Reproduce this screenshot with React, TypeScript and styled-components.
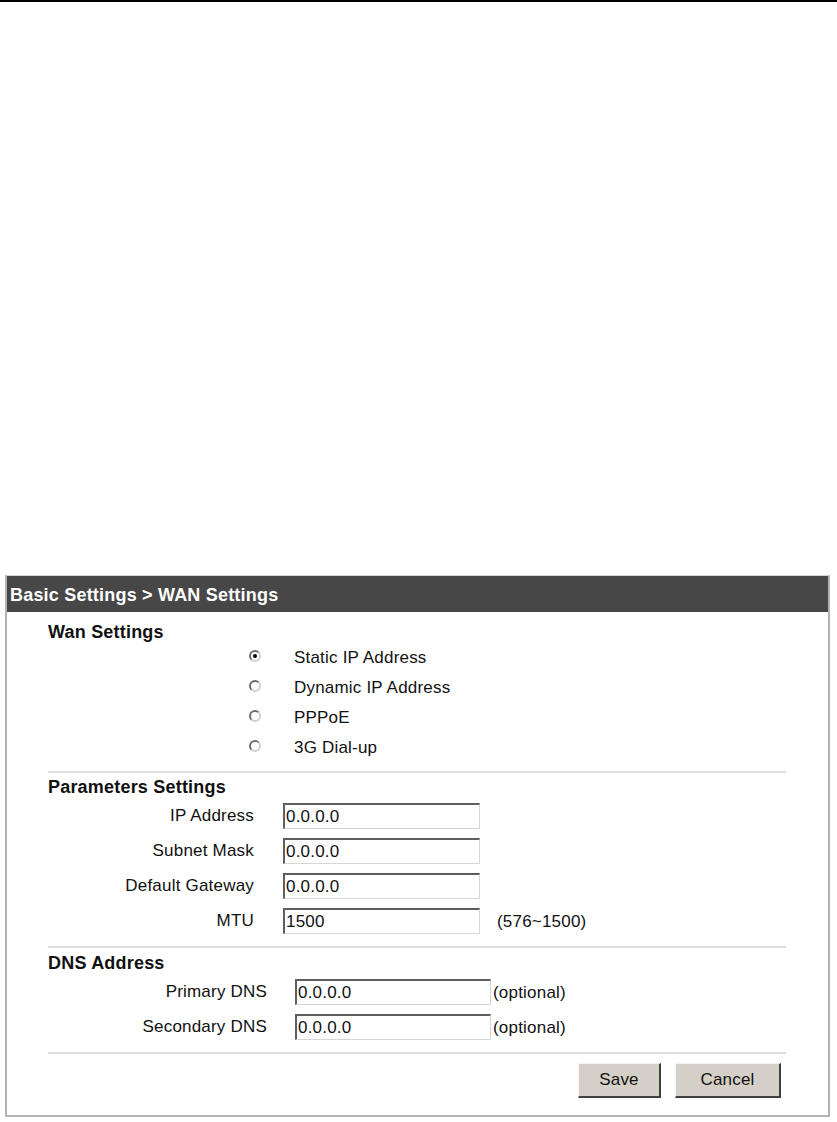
import React from "react";
import styled, { createGlobalStyle } from "styled-components";

const Global = createGlobalStyle`
  html, body { margin: 0; padding: 0; background: #ffffff; }
  body { font-family: "Liberation Sans", Arial, sans-serif; color: #111111; }
`;

const Page = styled.div`
  width: 837px;
  height: 1122px;
  display: flex;
  flex-direction: column;
  box-sizing: border-box;
`;

const TopRule = styled.div`
  height: 2px;
  background: #000000;
  width: 100%;
`;

const Panel = styled.section`
  margin: 573px 0 0 5px;
  width: 825px;
  box-sizing: border-box;
  border: 2px solid #b3b3b3;
  border-top: 1px solid #d4d4d4;
`;

const Header = styled.div`
  height: 36px;
  box-sizing: border-box;
  padding: 3px 0 0 3px;
  line-height: 33px;
  background: #474747;
  color: #ffffff;
  font-weight: bold;
  font-size: 18px;
  letter-spacing: 0.2px;
`;

const Body = styled.div`
  padding: 10px 42px 17px 41px;
  display: flex;
  flex-direction: column;
`;

const SectionTitle = styled.div<{ $gap?: number }>`
  font-weight: bold;
  font-size: 18px;
  line-height: 20px;
  letter-spacing: 0.2px;
  margin-top: ${(p) => p.$gap ?? 0}px;
`;

const Divider = styled.hr<{ $top: number }>`
  margin: ${(p) => p.$top}px 0 0 0;
  border: none;
  height: 2px;
  background: #dedede;
`;

const RadioList = styled.div`
  display: flex;
  flex-direction: column;
  margin-top: 1px;
`;

const RadioRow = styled.label`
  height: 30px;
  display: flex;
  align-items: center;
  padding-left: 201px;
  font-size: 17px;
  letter-spacing: 0.2px;
`;

const RadioMark = styled.span<{ $checked?: boolean }>`
  width: 12px;
  height: 12px;
  box-sizing: border-box;
  border-radius: 50%;
  border: 2px solid;
  border-color: #6e6e6e #d0d0d0 #d0d0d0 #6e6e6e;
  background: #ffffff;
  display: flex;
  align-items: center;
  justify-content: center;
  margin-right: 33px;
  margin-top: -5px;
  &::after {
    content: "";
    width: 4px;
    height: 4px;
    border-radius: 50%;
    background: ${(p) => (p.$checked ? "#000000" : "transparent")};
  }
`;

const FieldGrid = styled.div<{ $label: number; $gap: number; $top: number }>`
  display: grid;
  grid-template-columns: ${(p) => p.$label}px auto 1fr;
  column-gap: ${(p) => p.$gap}px;
  grid-auto-rows: 35px;
  align-items: center;
  margin-top: ${(p) => p.$top}px;
  font-size: 17px;
  letter-spacing: 0.2px;
`;

const FieldLabel = styled.div`
  text-align: right;
`;

const TextBox = styled.input<{ $w: number }>`
  width: ${(p) => p.$w}px;
  height: 26px;
  box-sizing: border-box;
  margin: 0;
  padding: 1px 0 0 1px;
  border-style: solid;
  border-width: 2px 1px 1px 2px;
  border-color: #5e5e5e #d6d6d6 #d6d6d6 #5e5e5e;
  background: #ffffff;
  font-family: "Liberation Sans", Arial, sans-serif;
  font-size: 17px;
  letter-spacing: 0.2px;
  color: #111111;
  outline: none;
`;

const Hint = styled.span<{ $left: number }>`
  margin-left: ${(p) => p.$left}px;
  padding-top: 3px;
`;

const HintCell = styled.div`
  display: flex;
  align-items: center;
`;

const ButtonBar = styled.div`
  display: flex;
  justify-content: flex-end;
  gap: 14px;
  padding-right: 5px;
  margin-top: 9px;
`;

const Button = styled.button<{ $w: number }>`
  width: ${(p) => p.$w}px;
  height: 35px;
  box-sizing: border-box;
  background: #d4d0c8;
  border-style: solid;
  border-width: 1px 2px 2px 1px;
  border-color: #f4f4f4 #404040 #404040 #f4f4f4;
  font-family: "Liberation Sans", Arial, sans-serif;
  font-size: 17px;
  letter-spacing: 0.2px;
  color: #111111;
  padding: 0;
`;

const wanOptions = [
  { label: "Static IP Address", checked: true },
  { label: "Dynamic IP Address" },
  { label: "PPPoE" },
  { label: "3G Dial-up" },
];

const params = [
  { label: "IP Address", value: "0.0.0.0" },
  { label: "Subnet Mask", value: "0.0.0.0" },
  { label: "Default Gateway", value: "0.0.0.0" },
  { label: "MTU", value: "1500", hint: "(576~1500)" },
];

const dns = [
  { label: "Primary DNS", value: "0.0.0.0" },
  { label: "Secondary DNS", value: "0.0.0.0" },
];

export default function App() {
  return (
    <>
      <Global />
      <Page>
        <TopRule />
        <Panel>
          <Header>Basic Settings &gt; WAN Settings</Header>
          <Body>
            <SectionTitle>Wan Settings</SectionTitle>
            <RadioList>
              {wanOptions.map((o) => (
                <RadioRow key={o.label}>
                  <RadioMark $checked={o.checked} />
                  {o.label}
                </RadioRow>
              ))}
            </RadioList>
            <Divider $top={8} />
            <SectionTitle $gap={4}>Parameters Settings</SectionTitle>
            <FieldGrid $label={206} $gap={29} $top={1}>
              {params.map((f) => (
                <React.Fragment key={f.label}>
                  <FieldLabel>{f.label}</FieldLabel>
                  <TextBox $w={197} defaultValue={f.value} />
                  <HintCell>{f.hint && <Hint $left={-12}>{f.hint}</Hint>}</HintCell>
                </React.Fragment>
              ))}
            </FieldGrid>
            <Divider $top={8} />
            <SectionTitle $gap={5}>DNS Address</SectionTitle>
            <FieldGrid $label={219} $gap={28} $top={1}>
              {dns.map((f) => (
                <React.Fragment key={f.label}>
                  <FieldLabel>{f.label}</FieldLabel>
                  <TextBox $w={196} defaultValue={f.value} />
                  <HintCell>
                    <Hint $left={-26}>(optional)</Hint>
                  </HintCell>
                </React.Fragment>
              ))}
            </FieldGrid>
            <Divider $top={8} />
            <ButtonBar>
              <Button $w={83}>Save</Button>
              <Button $w={106}>Cancel</Button>
            </ButtonBar>
          </Body>
        </Panel>
      </Page>
    </>
  );
}
